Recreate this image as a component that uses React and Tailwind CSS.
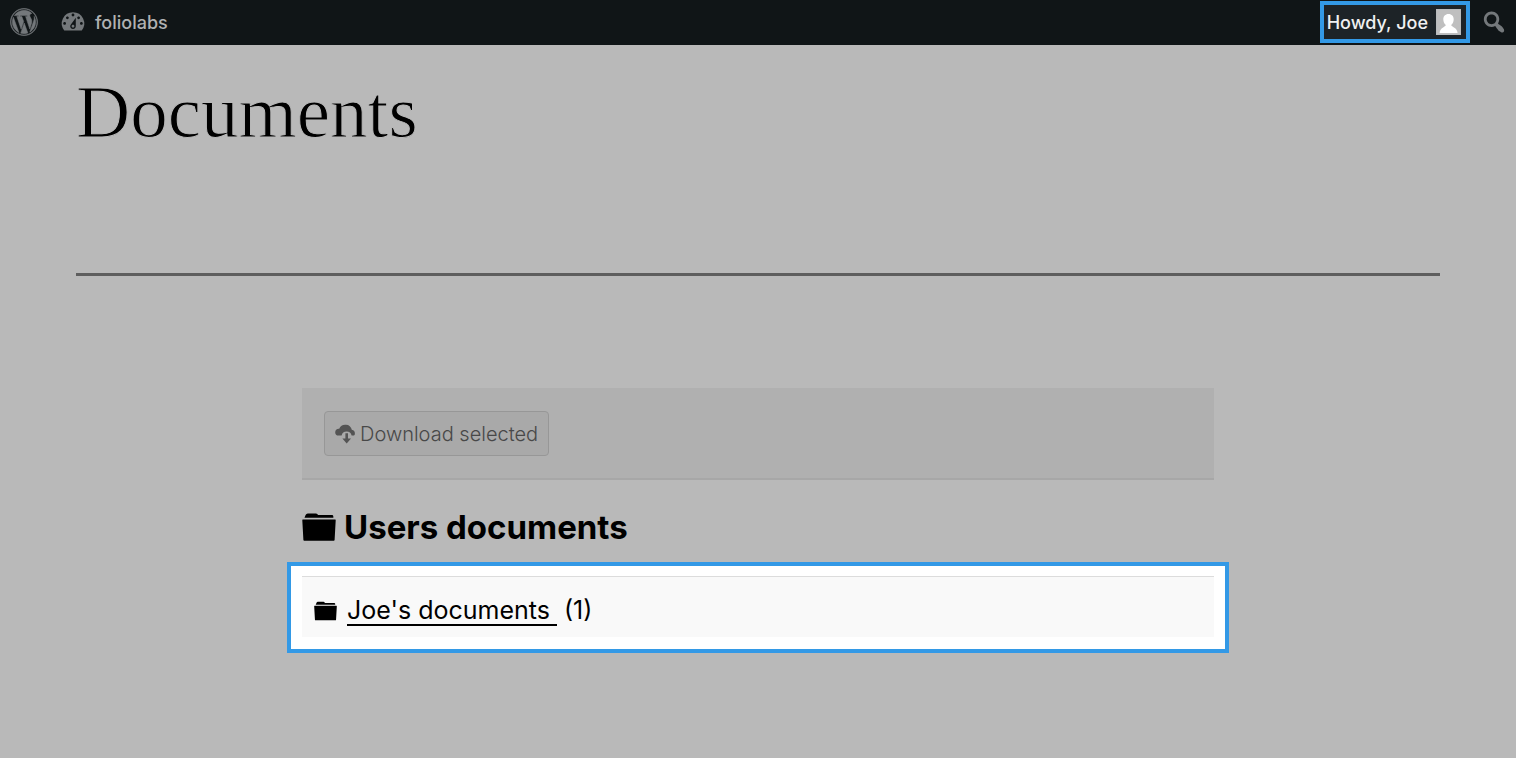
import React from 'react';
import { FaWordpress } from 'react-icons/fa';

const DashboardIcon = ({ className }) => (
  <svg viewBox="0 0 20 20" fill="currentColor" className={className} aria-hidden="true">
    <path d="M3.76 16h12.48A7.998 7.998 0 0 0 10 3a7.998 7.998 0 0 0-6.24 13zM10 4c.55 0 1 .45 1 1s-.45 1-1 1-1-.45-1-1 .45-1 1-1zM6 6c.55 0 1 .45 1 1s-.45 1-1 1-1-.45-1-1 .45-1 1-1zm8 0c.55 0 1 .45 1 1s-.45 1-1 1-1-.45-1-1 .45-1 1-1zm-5.37 5.55L12 7v6c0 1.1-.9 2-2 2s-2-.9-2-2c0-.57.24-1.08.63-1.45zM4 10c.55 0 1 .45 1 1s-.45 1-1 1-1-.45-1-1 .45-1 1-1zm12 0c.55 0 1 .45 1 1s-.45 1-1 1-1-.45-1-1 .45-1 1-1zm-5 3c0-.55-.45-1-1-1s-1 .45-1 1 .45 1 1 1 1-.45 1-1z" />
  </svg>
);

const SearchIcon = ({ className }) => (
  <svg viewBox="0 0 20 20" fill="currentColor" className={className} aria-hidden="true">
    <path d="M12.14 4.18c1.87 1.87 2.11 4.75.72 6.89.12.1.22.21.36.31.2.16.47.36.81.59.34.24.56.39.66.47.42.31.73.57.94.78.32.32.6.65.84 1 .25.35.44.69.59 1.04.14.35.21.68.18 1-.02.32-.14.59-.36.81s-.49.34-.81.36c-.31.02-.65-.04-.99-.19-.35-.14-.7-.34-1.04-.59-.35-.24-.68-.52-1-.84-.21-.21-.47-.52-.77-.93-.1-.13-.25-.35-.47-.66-.22-.32-.4-.57-.56-.78-.16-.2-.29-.35-.44-.5-2.07 1.09-4.69.76-6.44-.98-2.14-2.15-2.14-5.64 0-7.78 2.15-2.15 5.63-2.15 7.78 0zm-1.41 6.36c1.36-1.37 1.36-3.58 0-4.95-1.37-1.37-3.59-1.37-4.95 0-1.37 1.37-1.37 3.58 0 4.95 1.36 1.37 3.58 1.37 4.95 0z" />
  </svg>
);

const FolderIcon = ({ className }) => (
  <svg viewBox="0 0 34 28" fill="currentColor" className={className} aria-hidden="true">
    <path d="M2.5 4.8 L3.6 2 Q4.2 .4 5.8 .4 H14 Q15.6 .4 16 2 H30 Q31.2 2 31.3 3.2 L31.4 4.8 Z" />
    <path d="M.8 6.4 H33.2 Q33.8 6.4 33.7 7.2 L32.6 27 Q32.5 27.8 31.8 27.8 H2.2 Q1.5 27.8 1.4 27 L.3 7.2 Q.2 6.4 .8 6.4 Z" />
  </svg>
);

const CloudDownloadIcon = ({ className }) => (
  <svg viewBox="0 0 20 20" fill="currentColor" className={className} aria-hidden="true">
    <path d="M6.6 11.6 H3.6 A3.4 3.4 0 0 1 .2 8.2 A3.4 3.4 0 0 1 4.2 4.8 A6.6 6.6 0 0 1 10.8 .8 A5.8 5.8 0 0 1 16.8 5.8 A4 4 0 0 1 19.9 9.8 Q19.9 11.6 18.8 11.6 H16.6 A5.1 5.1 0 0 0 6.6 11.6 Z" />
    <path d="M10.4 9.2 H13 V14.4 H16 L11.7 19.6 L7.4 14.4 H10.4 Z" />
  </svg>
);

const Avatar = () => (
  <svg viewBox="0 0 25 26" className="h-[26px] w-[25px]" aria-hidden="true">
    <rect width="25" height="26" fill="#b9bbbd" />
    <rect x="1" y="1" width="23" height="24" fill="#bfbfbf" />
    <path fill="#fff" d="M12.5 5 C15.8 5 17.7 7.4 17.7 10.3 C17.7 12.9 16.6 14.8 15.2 16 C15.4 18 21.3 18.4 21.6 24 H3.6 C3.9 18.4 9.6 18 9.8 16 C8.4 14.8 7.3 12.9 7.3 10.3 C7.3 7.4 9.2 5 12.5 5 Z" />
  </svg>
);

const folders = [{ name: "Joe's documents", count: 1 }];

export default function App() {
  return (
    <div className="min-h-screen bg-[#b9b9b9] font-['Inter',sans-serif] text-black">
      <nav className="flex h-[45px] items-center justify-between bg-[#101517] pr-2 pb-px pl-[10px] text-[#74787b]">
        <div className="flex items-center">
          <a href="#" aria-label="About WordPress">
            <FaWordpress className="h-7 w-7 stroke-current stroke-[10px]" />
          </a>
          <a href="#" className="ml-[21px] flex items-center gap-2 text-lg font-medium text-[#b0b1b2]">
            <DashboardIcon className="h-7 w-7 text-[#74787b]" />
            <span className="pt-px">foliolabs</span>
          </a>
        </div>
        <div className="flex items-center gap-[10px]">
          <a
            href="#"
            className="flex h-[42px] items-center gap-2 border-4 border-[#3399e6] bg-[#1d2327] pr-[5px] pl-[3px] text-lg font-medium text-[#f0f0f1]"
          >
            <span className="pt-px">Howdy, Joe</span>
            <Avatar />
          </a>
          <button type="button" aria-label="Search">
            <SearchIcon className="h-7 w-7" />
          </button>
        </div>
      </nav>

      <header className="mx-[76px] border-b-3 border-[#5e5e5e] pt-[22px] pb-[116px]">
        <h1 className="font-['Liberation_Serif',serif] text-[75px] leading-[90px] [-webkit-text-stroke:1px_#b9b9b9]">
          Documents
        </h1>
      </header>

      <main className="mx-auto max-w-[912px] pt-28">
        <div className="border-b-2 border-[#a7a7a7] bg-[#b0b0b0] px-[22px] pt-[23px] pb-[22px]">
          <button
            type="button"
            disabled
            className="flex h-[45px] items-center gap-[5px] rounded-[4px] border border-[#979797] bg-[#a9a9a9] px-[10px] text-xl font-light text-[#484848]"
          >
            <CloudDownloadIcon className="h-5 w-5 text-[#545454]" />
            Download selected
          </button>
        </div>

        <h2 className="mt-[27px] flex items-center gap-2 text-[33px] leading-10 font-bold">
          <FolderIcon className="h-7 w-[34px]" />
          Users documents
        </h2>

        <section className="-mx-[15px] mt-[15px] border-4 border-[#3399e6] bg-white px-[11px] pt-[10px] pb-3">
          <ul>
            {folders.map((folder) => (
              <li
                key={folder.name}
                className="flex h-[61px] items-center border-t border-[#dcdcdc] bg-[#f9f9f9] px-3 pt-2 text-[25px]"
              >
                <FolderIcon className="mr-[10px] h-5 w-[23px]" />
                <a href="#" className="border-b-2 border-black pr-[7px] leading-7">
                  {folder.name}
                </a>
                <span className="ml-[7px]">({folder.count})</span>
              </li>
            ))}
          </ul>
        </section>
      </main>
    </div>
  );
}
